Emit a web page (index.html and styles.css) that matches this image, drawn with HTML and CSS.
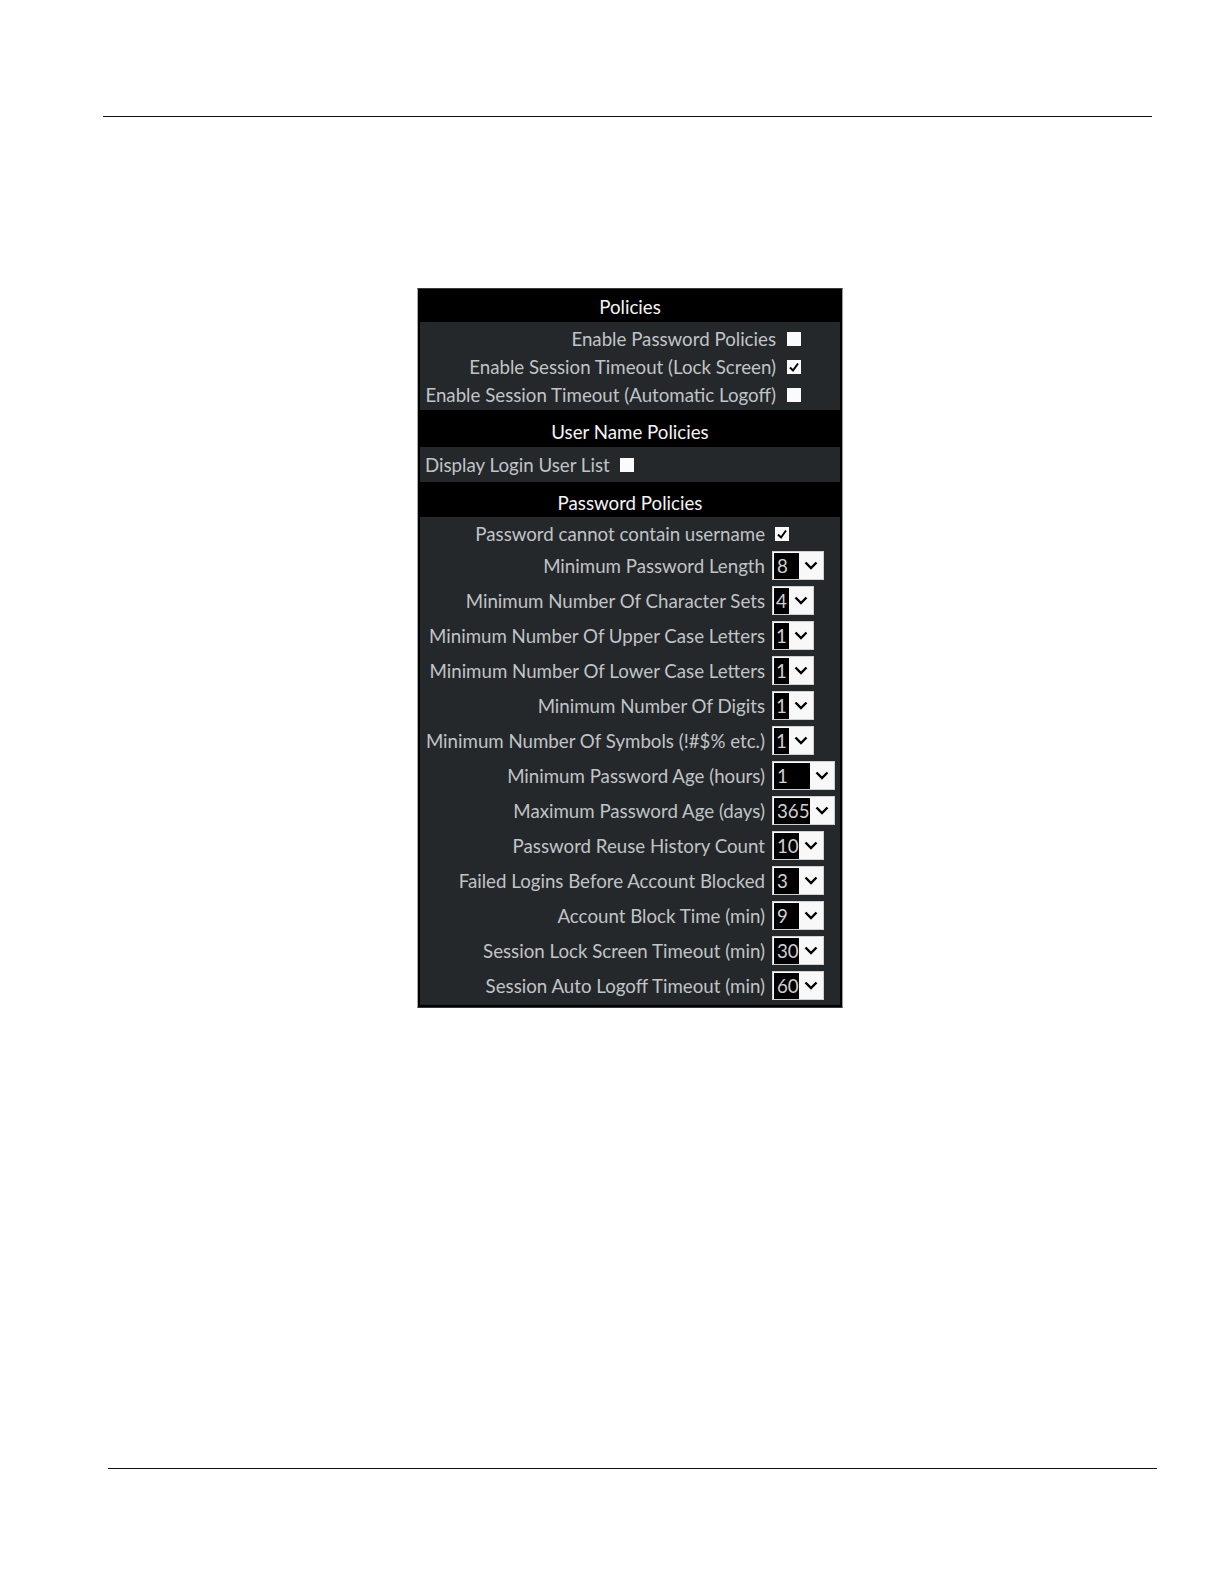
FILE: index.html
```html
<!DOCTYPE html>
<html>
<head>
<meta charset="utf-8">
<link rel="stylesheet" href="styles.css">
</head>
<body>
<div class="page">
  <div class="rule rule-top"></div>
  <div class="panel">
    <div class="head h1">Policies</div>
    <div class="body b1">
      <div class="lbl">Enable Password Policies</div><span class="cb"></span>
      <div class="lbl">Enable Session Timeout (Lock Screen)</div><span class="cb on"><svg viewBox="0 0 14 14" width="14" height="14"><polyline points="3,7.5 6,10.5 11,3.5" fill="none" stroke="#000" stroke-width="2"/></svg></span>
      <div class="lbl">Enable Session Timeout (Automatic Logoff)</div><span class="cb"></span>
    </div>
    <div class="head h2">User Name Policies</div>
    <div class="body b2">
      <div class="lbl">Display Login User List</div><span class="cb"></span>
    </div>
    <div class="head h3">Password Policies</div>
    <div class="body b3">
      <div class="row first"><div class="lbl">Password cannot contain username</div><span class="cb on cb3"><svg viewBox="0 0 14 14" width="14" height="14"><polyline points="3,7.5 6,10.5 11,3.5" fill="none" stroke="#000" stroke-width="2"/></svg></span></div>
      <div class="row"><div class="lbl">Minimum Password Length</div><div class="sel a"><span class="val">8</span><span class="arr"><svg viewBox="0 0 14 9" width="14" height="9"><path d="M1.5 1.5 L7 7 L12.5 1.5" fill="none" stroke="#000" stroke-width="2.4"/></svg></span></div></div>
      <div class="row"><div class="lbl">Minimum Number Of Character Sets</div><div class="sel b"><span class="val">4</span><span class="arr"><svg viewBox="0 0 14 9" width="14" height="9"><path d="M1.5 1.5 L7 7 L12.5 1.5" fill="none" stroke="#000" stroke-width="2.4"/></svg></span></div></div>
      <div class="row"><div class="lbl">Minimum Number Of Upper Case Letters</div><div class="sel b"><span class="val">1</span><span class="arr"><svg viewBox="0 0 14 9" width="14" height="9"><path d="M1.5 1.5 L7 7 L12.5 1.5" fill="none" stroke="#000" stroke-width="2.4"/></svg></span></div></div>
      <div class="row"><div class="lbl">Minimum Number Of Lower Case Letters</div><div class="sel b"><span class="val">1</span><span class="arr"><svg viewBox="0 0 14 9" width="14" height="9"><path d="M1.5 1.5 L7 7 L12.5 1.5" fill="none" stroke="#000" stroke-width="2.4"/></svg></span></div></div>
      <div class="row"><div class="lbl">Minimum Number Of Digits</div><div class="sel b"><span class="val">1</span><span class="arr"><svg viewBox="0 0 14 9" width="14" height="9"><path d="M1.5 1.5 L7 7 L12.5 1.5" fill="none" stroke="#000" stroke-width="2.4"/></svg></span></div></div>
      <div class="row"><div class="lbl">Minimum Number Of Symbols (!#$% etc.)</div><div class="sel b"><span class="val">1</span><span class="arr"><svg viewBox="0 0 14 9" width="14" height="9"><path d="M1.5 1.5 L7 7 L12.5 1.5" fill="none" stroke="#000" stroke-width="2.4"/></svg></span></div></div>
      <div class="row"><div class="lbl">Minimum Password Age (hours)</div><div class="sel c"><span class="val">1</span><span class="arr"><svg viewBox="0 0 14 9" width="14" height="9"><path d="M1.5 1.5 L7 7 L12.5 1.5" fill="none" stroke="#000" stroke-width="2.4"/></svg></span></div></div>
      <div class="row"><div class="lbl">Maximum Password Age (days)</div><div class="sel c"><span class="val">365</span><span class="arr"><svg viewBox="0 0 14 9" width="14" height="9"><path d="M1.5 1.5 L7 7 L12.5 1.5" fill="none" stroke="#000" stroke-width="2.4"/></svg></span></div></div>
      <div class="row"><div class="lbl">Password Reuse History Count</div><div class="sel a"><span class="val">10</span><span class="arr"><svg viewBox="0 0 14 9" width="14" height="9"><path d="M1.5 1.5 L7 7 L12.5 1.5" fill="none" stroke="#000" stroke-width="2.4"/></svg></span></div></div>
      <div class="row"><div class="lbl">Failed Logins Before Account Blocked</div><div class="sel a"><span class="val">3</span><span class="arr"><svg viewBox="0 0 14 9" width="14" height="9"><path d="M1.5 1.5 L7 7 L12.5 1.5" fill="none" stroke="#000" stroke-width="2.4"/></svg></span></div></div>
      <div class="row"><div class="lbl">Account Block Time (min)</div><div class="sel a"><span class="val">9</span><span class="arr"><svg viewBox="0 0 14 9" width="14" height="9"><path d="M1.5 1.5 L7 7 L12.5 1.5" fill="none" stroke="#000" stroke-width="2.4"/></svg></span></div></div>
      <div class="row"><div class="lbl">Session Lock Screen Timeout (min)</div><div class="sel a"><span class="val">30</span><span class="arr"><svg viewBox="0 0 14 9" width="14" height="9"><path d="M1.5 1.5 L7 7 L12.5 1.5" fill="none" stroke="#000" stroke-width="2.4"/></svg></span></div></div>
      <div class="row"><div class="lbl">Session Auto Logoff Timeout (min)</div><div class="sel a"><span class="val">60</span><span class="arr"><svg viewBox="0 0 14 9" width="14" height="9"><path d="M1.5 1.5 L7 7 L12.5 1.5" fill="none" stroke="#000" stroke-width="2.4"/></svg></span></div></div>
    </div>
  </div>
  <div class="rule rule-bottom"></div>
</div>
</body>
</html>
```

FILE: styles.css
```css
html, body {
  margin: 0;
  padding: 0;
  background: #ffffff;
}
.page {
  padding-top: 116px;
  font-family: Lato, "Noto Sans", sans-serif;
}
.rule {
  height: 1px;
  background: #111;
}
.rule-top {
  margin-left: 103px;
  width: 1049px;
}
.rule-bottom {
  margin-top: 460px;
  margin-left: 108px;
  width: 1049px;
}
.panel {
  box-sizing: border-box;
  margin-top: 171px;
  margin-left: 417px;
  width: 426px;
  height: 720px;
  background: #000;
  border: 1px solid #3a3a3a;
  border-left-color: #a8a8a8;
  border-right-color: #9a9a9a;
  padding-bottom: 2px;
}
.head {
  color: #f4f4f4;
  font-size: 18.7px;
  text-align: center;
  box-sizing: border-box;
}
.h1 { height: 33px; line-height: 36px; }
.h2 { height: 32px; line-height: 34px; margin-top: 5px; }
.h3 { height: 30px; line-height: 32px; margin-top: 5px; }
.body {
  box-sizing: border-box;
  margin-left: 2px;
  margin-right: 2px;
  background: #24282b;
  color: #c0c4c6;
  font-size: 18.7px;
}
.lbl {
  white-space: nowrap;
}
.b1 {
  height: 88px;
  padding-top: 3px;
  padding-right: 39px;
  display: grid;
  grid-template-columns: 1fr 14px;
  grid-auto-rows: 28px;
  column-gap: 11px;
  align-items: center;
}
.b1 .lbl { text-align: right; }
.b2 {
  height: 35px;
  padding-left: 5px;
  display: flex;
  align-items: center;
  gap: 10px;
}
.b3 {
  height: 488px;
  padding-top: 2px;
  padding-bottom: 5px;
  display: flex;
  flex-direction: column;
  gap: 6px;
}
.row {
  display: grid;
  grid-template-columns: 1fr 68px;
  column-gap: 7px;
  align-items: center;
  height: 29px;
}
.row .lbl { text-align: right; }
.row.first {
  height: 30px;
  margin-bottom: -4px;
}
.cb {
  display: block;
  width: 14px;
  height: 14px;
  background: #fbfbfb;
}
.cb svg { display: block; }
.cb3 { margin-left: 3px; }
.sel {
  box-sizing: border-box;
  display: flex;
  height: 29px;
  border: 1px solid #cfcfcf;
  background: #f8f8f8;
}
.sel.a { width: 52px; }
.sel.b { width: 42px; }
.sel.c { width: 63px; }
.val {
  box-sizing: border-box;
  background: #000;
  color: #d0d0d0;
  font-size: 18.7px;
  line-height: 27px;
  padding-left: 3px;
  border-top: 1px solid #fff;
  border-left: 1px solid #fff;
}
.sel.a .val { width: 26px; }
.sel.b .val { width: 16px; padding-left: 2px; }
.sel.c .val { width: 37px; }
.arr {
  flex: 1;
  display: flex;
  align-items: center;
  justify-content: center;
}
.arr svg { display: block; }
```
